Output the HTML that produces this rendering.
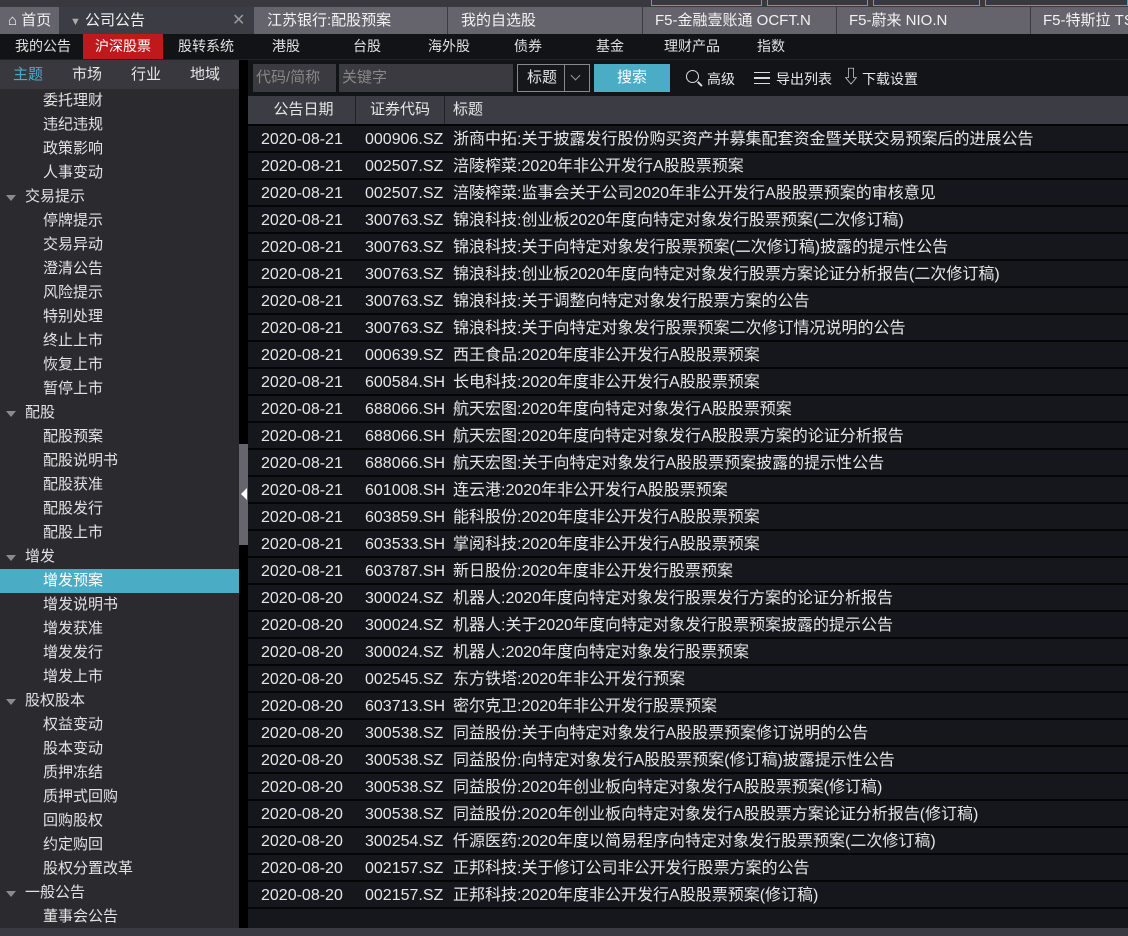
<!DOCTYPE html>
<html><head><meta charset="utf-8"><style>
*{margin:0;padding:0;box-sizing:border-box}
body{width:1128px;height:936px;overflow:hidden;background:#000;font-family:"Liberation Sans","Noto Sans CJK SC",sans-serif;font-size:15px;color:#e6e6e6;position:relative}
.abs{position:absolute}
.tab{position:absolute;top:7px;height:27px;line-height:27px;background:#65646c;border-right:1px solid #3b3b42;color:#f2f2f2;font-size:15px;padding-left:13px;white-space:nowrap;overflow:hidden}
.nav span{position:absolute;top:0;height:25px;line-height:24px;font-size:14px;color:#e0e0e0}
.side div{height:24px;line-height:24px;font-size:15px;color:#e2e2e2;white-space:nowrap}
.c{padding-left:43px}
.p{padding-left:25px;position:relative}
.p:before{content:"";position:absolute;left:6px;top:10px;border-left:5px solid transparent;border-right:5px solid transparent;border-top:6px solid #8a8a90}
.row{height:27px;background:#15171c;border-bottom:2px solid #050506;line-height:27px;position:relative;white-space:nowrap;font-size:16px}
.row span{position:absolute;top:0}
</style></head><body>
<div class="abs" style="left:0;top:0;width:1128px;height:7px;background:#38383e"></div>
<div class="abs" style="left:651px;top:0;width:111px;height:6px;border:1px solid #4aa8bf;border-top:none"></div>
<div class="abs" style="left:767px;top:0;width:101px;height:6px;border:1px solid #4aa8bf;border-top:none"></div>
<div class="abs" style="left:873px;top:0;width:107px;height:6px;border:1px solid #4aa8bf;border-top:none"></div>
<div class="abs" style="left:985px;top:0;width:143px;height:6px;border:1px solid #4aa8bf;border-top:none"></div>
<div class="tab" style="left:0;width:60px;padding-left:8px">⌂ 首页</div>
<div class="tab" style="left:60px;width:194px;background:#3c3c44;padding-left:10px"><span style="color:#aaa;font-size:11px">▼</span> 公司公告<span style="position:absolute;left:172px;color:#999;font-size:16px">✕</span></div>
<div class="tab" style="left:254px;width:194px">江苏银行:配股预案</div>
<div class="tab" style="left:448px;width:195px">我的自选股</div>
<div class="tab" style="left:643px;width:194px;padding-left:12px">F5-金融壹账通 OCFT.N</div>
<div class="tab" style="left:837px;width:194px;padding-left:12px">F5-蔚来 NIO.N</div>
<div class="tab" style="left:1031px;width:97px;padding-left:12px;border:none">F5-特斯拉 TSLA</div>
<div class="abs nav" style="left:0;top:34px;width:1128px;height:26px;background:#121317;border-bottom:1px solid #222">
<span style="left:15px">我的公告</span>
<span style="left:83px;width:80px;background:#c0191c;text-align:center;color:#fff">沪深股票</span>
<span style="left:178px">股转系统</span><span style="left:272px">港股</span><span style="left:353px">台股</span><span style="left:428px">海外股</span><span style="left:514px">债券</span><span style="left:596px">基金</span><span style="left:664px">理财产品</span><span style="left:757px">指数</span>
</div>
<div class="abs" style="left:0;top:60px;width:239px;height:868px;background:#2a2a2f"></div>
<div class="abs" style="left:0;top:60px;width:239px;height:29px;background:#38383e;font-size:15px;line-height:29px">
<span class="abs" style="left:13px;color:#4bacc6">主题</span><span class="abs" style="left:72px">市场</span><span class="abs" style="left:131px">行业</span><span class="abs" style="left:190px">地域</span></div>
<div class="abs side" style="left:0;top:89px;width:239px">
<div class="c">委托理财</div><div class="c">违纪违规</div><div class="c">政策影响</div><div class="c">人事变动</div>
<div class="p">交易提示</div><div class="c">停牌提示</div><div class="c">交易异动</div><div class="c">澄清公告</div><div class="c">风险提示</div><div class="c">特别处理</div><div class="c">终止上市</div><div class="c">恢复上市</div><div class="c">暂停上市</div>
<div class="p">配股</div><div class="c">配股预案</div><div class="c">配股说明书</div><div class="c">配股获准</div><div class="c">配股发行</div><div class="c">配股上市</div>
<div class="p">增发</div><div class="c" style="background:#4bacc6;color:#fff">增发预案</div><div class="c">增发说明书</div><div class="c">增发获准</div><div class="c">增发发行</div><div class="c">增发上市</div>
<div class="p">股权股本</div><div class="c">权益变动</div><div class="c">股本变动</div><div class="c">质押冻结</div><div class="c">质押式回购</div><div class="c">回购股权</div><div class="c">约定购回</div><div class="c">股权分置改革</div>
<div class="p">一般公告</div><div class="c">董事会公告</div>
</div>
<div class="abs" style="left:239px;top:444px;width:10px;height:101px;background:#66656d"></div>
<div class="abs" style="left:241px;top:488px;border-top:6px solid transparent;border-bottom:6px solid transparent;border-right:6px solid #fff"></div>
<div class="abs" style="left:248px;top:60px;width:880px;height:36px;background:#131418"></div>
<div class="abs" style="left:253px;top:64px;width:83px;height:28px;background:#3a3a40;color:#888;line-height:28px;padding-left:3px">代码/简称</div>
<div class="abs" style="left:339px;top:64px;width:174px;height:28px;background:#3a3a40;color:#888;line-height:28px;padding-left:3px">关键字</div>
<div class="abs" style="left:517px;top:64px;width:73px;height:28px;border:1px solid #888;background:#16171b;line-height:26px;padding-left:9px">标题</div>
<div class="abs" style="left:564px;top:65px;width:1px;height:26px;background:#888"></div>
<div class="abs" style="left:572px;top:72px;width:7px;height:7px;border-right:1px solid #999;border-bottom:1px solid #999;transform:rotate(45deg)"></div>
<div class="abs" style="left:594px;top:64px;width:76px;height:28px;background:#4bacc6;color:#fff;line-height:28px;text-align:center">搜索</div>
<div class="abs" style="left:686px;top:70px;width:13px;height:13px;border:1.5px solid #ddd;border-radius:50%"></div>
<div class="abs" style="left:697px;top:83px;width:6px;height:1.5px;background:#ddd;transform:rotate(45deg)"></div>
<div class="abs" style="left:707px;top:69px;line-height:20px;font-size:14px">高级</div>
<div class="abs" style="left:754px;top:72px;width:16px;height:12px;border-top:1.5px solid #ddd;border-bottom:1.5px solid #ddd"></div>
<div class="abs" style="left:754px;top:77px;width:16px;height:1.5px;background:#ddd"></div>
<div class="abs" style="left:776px;top:69px;line-height:20px;font-size:14px">导出列表</div>
<div class="abs" style="left:842px;top:66px;font-size:18px;line-height:22px;color:#ddd">⇩</div>
<div class="abs" style="left:862px;top:69px;line-height:20px;font-size:14px">下载设置</div>
<div class="abs" style="left:248px;top:96px;width:880px;height:28px;background:#3c3c44;line-height:28px">
<span class="abs" style="left:0;width:108px;text-align:center;border-right:1px solid #222;padding-left:4px">公告日期</span>
<span class="abs" style="left:108px;width:89px;border-right:1px solid #222;text-align:center">证券代码</span>
<span class="abs" style="left:205px">标题</span></div>
<div class="abs" style="left:248px;top:124px;width:880px;height:804px;background:#15171c"></div>
<div class="abs" style="left:248px;top:124px;width:880px;height:2px;background:#050506"></div>
<div class="abs" style="left:248px;top:126px;width:880px">
<div class="row"><span style="left:13px">2020-08-21</span><span style="left:117px">000906.SZ</span><span style="left:205px">浙商中拓:关于披露发行股份购买资产并募集配套资金暨关联交易预案后的进展公告</span></div>
<div class="row"><span style="left:13px">2020-08-21</span><span style="left:117px">002507.SZ</span><span style="left:205px">涪陵榨菜:2020年非公开发行A股股票预案</span></div>
<div class="row"><span style="left:13px">2020-08-21</span><span style="left:117px">002507.SZ</span><span style="left:205px">涪陵榨菜:监事会关于公司2020年非公开发行A股股票预案的审核意见</span></div>
<div class="row"><span style="left:13px">2020-08-21</span><span style="left:117px">300763.SZ</span><span style="left:205px">锦浪科技:创业板2020年度向特定对象发行股票预案(二次修订稿)</span></div>
<div class="row"><span style="left:13px">2020-08-21</span><span style="left:117px">300763.SZ</span><span style="left:205px">锦浪科技:关于向特定对象发行股票预案(二次修订稿)披露的提示性公告</span></div>
<div class="row"><span style="left:13px">2020-08-21</span><span style="left:117px">300763.SZ</span><span style="left:205px">锦浪科技:创业板2020年度向特定对象发行股票方案论证分析报告(二次修订稿)</span></div>
<div class="row"><span style="left:13px">2020-08-21</span><span style="left:117px">300763.SZ</span><span style="left:205px">锦浪科技:关于调整向特定对象发行股票方案的公告</span></div>
<div class="row"><span style="left:13px">2020-08-21</span><span style="left:117px">300763.SZ</span><span style="left:205px">锦浪科技:关于向特定对象发行股票预案二次修订情况说明的公告</span></div>
<div class="row"><span style="left:13px">2020-08-21</span><span style="left:117px">000639.SZ</span><span style="left:205px">西王食品:2020年度非公开发行A股股票预案</span></div>
<div class="row"><span style="left:13px">2020-08-21</span><span style="left:117px">600584.SH</span><span style="left:205px">长电科技:2020年度非公开发行A股股票预案</span></div>
<div class="row"><span style="left:13px">2020-08-21</span><span style="left:117px">688066.SH</span><span style="left:205px">航天宏图:2020年度向特定对象发行A股股票预案</span></div>
<div class="row"><span style="left:13px">2020-08-21</span><span style="left:117px">688066.SH</span><span style="left:205px">航天宏图:2020年度向特定对象发行A股股票方案的论证分析报告</span></div>
<div class="row"><span style="left:13px">2020-08-21</span><span style="left:117px">688066.SH</span><span style="left:205px">航天宏图:关于向特定对象发行A股股票预案披露的提示性公告</span></div>
<div class="row"><span style="left:13px">2020-08-21</span><span style="left:117px">601008.SH</span><span style="left:205px">连云港:2020年非公开发行A股股票预案</span></div>
<div class="row"><span style="left:13px">2020-08-21</span><span style="left:117px">603859.SH</span><span style="left:205px">能科股份:2020年度非公开发行A股股票预案</span></div>
<div class="row"><span style="left:13px">2020-08-21</span><span style="left:117px">603533.SH</span><span style="left:205px">掌阅科技:2020年度非公开发行A股股票预案</span></div>
<div class="row"><span style="left:13px">2020-08-21</span><span style="left:117px">603787.SH</span><span style="left:205px">新日股份:2020年度非公开发行股票预案</span></div>
<div class="row"><span style="left:13px">2020-08-20</span><span style="left:117px">300024.SZ</span><span style="left:205px">机器人:2020年度向特定对象发行股票发行方案的论证分析报告</span></div>
<div class="row"><span style="left:13px">2020-08-20</span><span style="left:117px">300024.SZ</span><span style="left:205px">机器人:关于2020年度向特定对象发行股票预案披露的提示公告</span></div>
<div class="row"><span style="left:13px">2020-08-20</span><span style="left:117px">300024.SZ</span><span style="left:205px">机器人:2020年度向特定对象发行股票预案</span></div>
<div class="row"><span style="left:13px">2020-08-20</span><span style="left:117px">002545.SZ</span><span style="left:205px">东方铁塔:2020年非公开发行预案</span></div>
<div class="row"><span style="left:13px">2020-08-20</span><span style="left:117px">603713.SH</span><span style="left:205px">密尔克卫:2020年非公开发行股票预案</span></div>
<div class="row"><span style="left:13px">2020-08-20</span><span style="left:117px">300538.SZ</span><span style="left:205px">同益股份:关于向特定对象发行A股股票预案修订说明的公告</span></div>
<div class="row"><span style="left:13px">2020-08-20</span><span style="left:117px">300538.SZ</span><span style="left:205px">同益股份:向特定对象发行A股股票预案(修订稿)披露提示性公告</span></div>
<div class="row"><span style="left:13px">2020-08-20</span><span style="left:117px">300538.SZ</span><span style="left:205px">同益股份:2020年创业板向特定对象发行A股股票预案(修订稿)</span></div>
<div class="row"><span style="left:13px">2020-08-20</span><span style="left:117px">300538.SZ</span><span style="left:205px">同益股份:2020年创业板向特定对象发行A股股票方案论证分析报告(修订稿)</span></div>
<div class="row"><span style="left:13px">2020-08-20</span><span style="left:117px">300254.SZ</span><span style="left:205px">仟源医药:2020年度以简易程序向特定对象发行股票预案(二次修订稿)</span></div>
<div class="row"><span style="left:13px">2020-08-20</span><span style="left:117px">002157.SZ</span><span style="left:205px">正邦科技:关于修订公司非公开发行股票方案的公告</span></div>
<div class="row"><span style="left:13px">2020-08-20</span><span style="left:117px">002157.SZ</span><span style="left:205px">正邦科技:2020年度非公开发行A股股票预案(修订稿)</span></div>
</div>
<div class="abs" style="left:0;top:928px;width:1128px;height:8px;background:#3a3a42"></div>
</body></html>
